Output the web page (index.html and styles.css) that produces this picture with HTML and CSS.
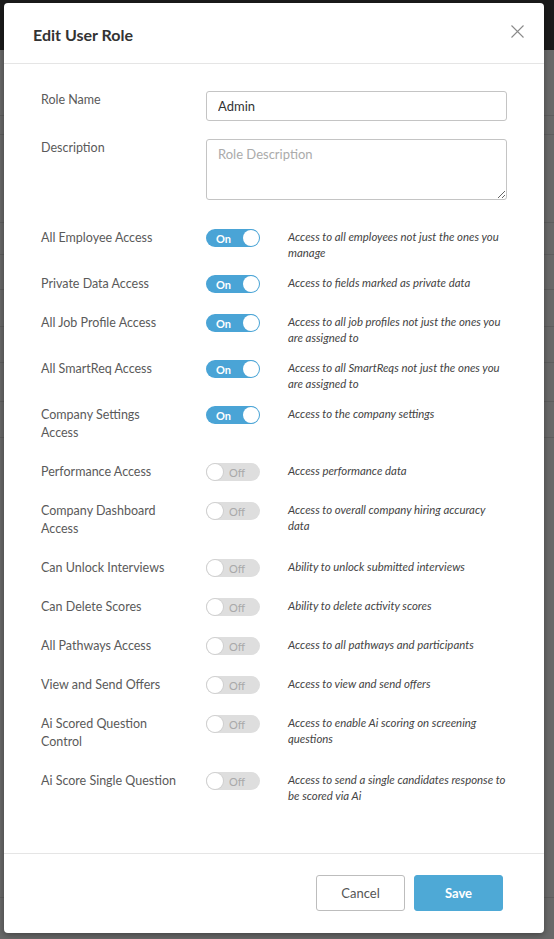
FILE: index.html
```html
<!DOCTYPE html>
<html lang="en">
<head>
<meta charset="utf-8">
<title>Edit User Role</title>
<link rel="stylesheet" href="styles.css">
</head>
<body>
<div class="page">
  <div class="topbar"></div>
  <div class="bg-row h66"></div>
  <div class="bg-row h19"></div>
  <div class="bg-row h88"></div>
  <div class="bg-row h32"></div>
  <div class="bg-row h35"></div>
  <div class="bg-row h37"></div>
  <div class="bg-row h36"></div>
  <div class="bg-row h39"></div>
  <div class="bg-row h36"></div>
  <div class="bg-row h460"></div>
</div>

<div class="overlay">
  <div class="modal">
    <div class="modal-header">
      <h2 class="modal-title">Edit User Role</h2>
      <button class="close-btn" aria-label="Close">
        <svg width="13" height="13" viewBox="0 0 13 13"><path d="M0.5 0.5 L12.5 12.5 M12.5 0.5 L0.5 12.5" stroke="#8a8a8a" stroke-width="1.1" fill="none"/></svg>
      </button>
    </div>

    <div class="modal-body">
      <div class="field field-name">
        <label class="label">Role Name</label>
        <input class="input" type="text" value="Admin">
      </div>
      <div class="field field-desc">
        <label class="label">Description</label>
        <textarea class="textarea" placeholder="Role Description"></textarea>
      </div>

      <div class="perm">
        <div class="label">All Employee Access</div>
        <div class="toggle on"><span class="toggle-text">On</span><span class="knob"></span></div>
        <div class="desc">Access to all employees not just the ones you manage</div>
      </div>
      <div class="perm">
        <div class="label">Private Data Access</div>
        <div class="toggle on"><span class="toggle-text">On</span><span class="knob"></span></div>
        <div class="desc">Access to fields marked as private data</div>
      </div>
      <div class="perm">
        <div class="label">All Job Profile Access</div>
        <div class="toggle on"><span class="toggle-text">On</span><span class="knob"></span></div>
        <div class="desc">Access to all job profiles not just the ones you are assigned to</div>
      </div>
      <div class="perm">
        <div class="label">All SmartReq Access</div>
        <div class="toggle on"><span class="toggle-text">On</span><span class="knob"></span></div>
        <div class="desc">Access to all SmartReqs not just the ones you are assigned to</div>
      </div>
      <div class="perm">
        <div class="label">Company Settings Access</div>
        <div class="toggle on"><span class="toggle-text">On</span><span class="knob"></span></div>
        <div class="desc">Access to the company settings</div>
      </div>
      <div class="perm">
        <div class="label">Performance Access</div>
        <div class="toggle off"><span class="knob"></span><span class="toggle-text">Off</span></div>
        <div class="desc">Access performance data</div>
      </div>
      <div class="perm">
        <div class="label">Company Dashboard Access</div>
        <div class="toggle off"><span class="knob"></span><span class="toggle-text">Off</span></div>
        <div class="desc">Access to overall company hiring accuracy data</div>
      </div>
      <div class="perm">
        <div class="label">Can Unlock Interviews</div>
        <div class="toggle off"><span class="knob"></span><span class="toggle-text">Off</span></div>
        <div class="desc">Ability to unlock submitted interviews</div>
      </div>
      <div class="perm">
        <div class="label">Can Delete Scores</div>
        <div class="toggle off"><span class="knob"></span><span class="toggle-text">Off</span></div>
        <div class="desc">Ability to delete activity scores</div>
      </div>
      <div class="perm">
        <div class="label">All Pathways Access</div>
        <div class="toggle off"><span class="knob"></span><span class="toggle-text">Off</span></div>
        <div class="desc">Access to all pathways and participants</div>
      </div>
      <div class="perm">
        <div class="label">View and Send Offers</div>
        <div class="toggle off"><span class="knob"></span><span class="toggle-text">Off</span></div>
        <div class="desc">Access to view and send offers</div>
      </div>
      <div class="perm">
        <div class="label">Ai Scored Question Control</div>
        <div class="toggle off"><span class="knob"></span><span class="toggle-text">Off</span></div>
        <div class="desc">Access to enable Ai scoring on screening questions</div>
      </div>
      <div class="perm">
        <div class="label">Ai Score Single Question</div>
        <div class="toggle off"><span class="knob"></span><span class="toggle-text">Off</span></div>
        <div class="desc">Access to send a single candidates response to be scored via Ai</div>
      </div>
    </div>

    <div class="modal-footer">
      <button class="btn btn-cancel">Cancel</button>
      <button class="btn btn-save">Save</button>
    </div>
  </div>
</div>
</body>
</html>
```

FILE: styles.css
```css
* { box-sizing: border-box; }

html, body {
  margin: 0;
  padding: 0;
  width: 554px;
  height: 939px;
  overflow: hidden;
  font-family: Lato, "Open Sans", Arial, sans-serif;
}

body { position: relative; background: #686868; }

.page {
  display: flex;
  flex-direction: column;
}
.topbar { height: 50px; background: #1b1b1b; }
.bg-row { border-bottom: 1px solid #5d5d5d; background: #686868; }
.h66 { height: 66px; }
.h19 { height: 19px; }
.h88 { height: 88px; }
.h32 { height: 32px; }
.h35 { height: 35px; }
.h37 { height: 37px; }
.h36 { height: 36px; }
.h39 { height: 39px; }
.h460 { height: 460px; }

.overlay {
  position: absolute;
  inset: 0;
  padding: 3px 10px 0 4px;
}

.modal {
  width: 540px;
  background: #fff;
  border-radius: 4px;
  box-shadow: 0 2px 6px rgba(0,0,0,0.35);
  display: flex;
  flex-direction: column;
}

.modal-header {
  height: 61px;
  border-bottom: 1px solid #e5e5e5;
  display: flex;
  align-items: center;
  justify-content: space-between;
  padding: 2px 20px 0 29px;
}
.modal-title {
  margin: 0;
  font-size: 16px;
  font-weight: 700;
  color: #333;
}
.close-btn {
  border: 0;
  background: none;
  padding: 0;
  width: 13px;
  height: 13px;
  display: block;
  margin-top: -6px;
}
.close-btn svg { display: block; }

.modal-body {
  padding: 27px 37px 35px 37px;
}

.field {
  display: grid;
  grid-template-columns: 165px 1fr;
  align-items: start;
}
.field-name { margin-bottom: 18px; }
.field-desc { margin-bottom: 29px; }

.label {
  font-size: 12.5px;
  line-height: 18px;
  color: #5a5a5a;
  padding-right: 27px;
}

.input, .textarea {
  width: 301px;
  border: 1px solid #c4c4c4;
  border-radius: 3px;
  font-family: Lato, "Open Sans", Arial, sans-serif;
  font-size: 13px;
  color: #333;
  padding: 0 11px;
  margin: 0;
  outline: none;
  background: #fff;
}
.input { height: 30px; }
.textarea {
  height: 61px;
  padding-top: 6px;
  resize: vertical;
  display: block;
}
.textarea::placeholder { color: #ababab; }

.perm {
  display: grid;
  grid-template-columns: 165px 82px 1fr;
  align-items: start;
  margin-bottom: 21px;
}

.desc {
  font-size: 11.4px;
  font-style: italic;
  line-height: 16px;
  color: #444;
  margin-top: 0;
  margin-bottom: -7px;
}

.toggle {
  width: 54px;
  height: 18px;
  border-radius: 9px;
  margin-top: 0;
  display: flex;
  align-items: center;
  padding: 0 1px;
  font-size: 11px;
}
.toggle.on {
  background: #4aa4d6;
  justify-content: space-between;
  padding-left: 10px;
}
.toggle.on .toggle-text { color: #fff; font-weight: 700; }
.toggle.off {
  background: #dedede;
}
.toggle.off .toggle-text { color: #a9a9a9; margin-left: 6px; }

.knob {
  width: 16px;
  height: 16px;
  border-radius: 50%;
  background: #fff;
  display: block;
}
.toggle.off .knob { box-shadow: 0 0 0 1px #d0d0d0; }

.modal-footer {
  border-top: 1px solid #e5e5e5;
  padding: 21px 41px 22px 0;
  display: flex;
  justify-content: flex-end;
  gap: 9px;
}

.btn {
  width: 89px;
  height: 36px;
  border-radius: 3px;
  font-family: Lato, "Open Sans", Arial, sans-serif;
  font-size: 13px;
  padding: 0;
}
.btn-cancel {
  background: #fff;
  border: 1px solid #bdbdbd;
  color: #555;
}
.btn-save {
  background: #4ea9d6;
  border: 1px solid #4ea9d6;
  color: #fff;
  font-weight: 700;
}
```
